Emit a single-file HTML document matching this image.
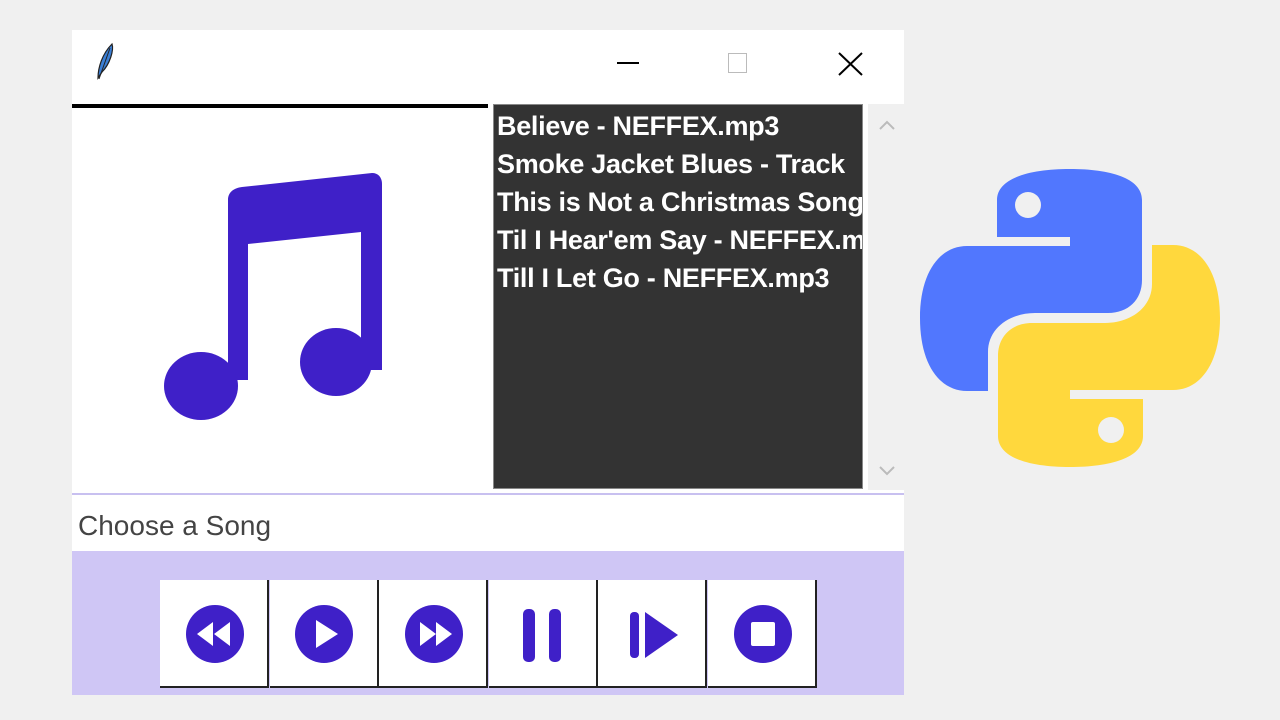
<!DOCTYPE html>
<html><head><style>
body{margin:0;width:1280px;height:720px;background:#f0f0f0;position:relative;overflow:hidden;font-family:"Liberation Sans",sans-serif}
.a{position:absolute}
.lst div{height:38px;line-height:38px;white-space:nowrap;font-weight:bold;font-size:27px;color:#fff;letter-spacing:-0.3px}
.btn{position:absolute;top:580px;width:107px;height:106px;background:#fff;border-right:2px solid #222;border-bottom:2px solid #222}
</style></head><body>
<div class="a" style="left:72px;top:30px;width:832px;height:665px;background:#fff"></div>
<svg class="a" style="left:92px;top:40px" width="30" height="42"><path d="M6 38 C6 28 10 14 20 4 C22 10 18 24 10 32 Z" fill="#3b7fd6" stroke="#222" stroke-width="1.2"/><path d="M7 39 L18 8" stroke="#222" stroke-width="1"/></svg>
<div class="a" style="left:617px;top:62px;width:22px;height:2px;background:#000"></div>
<div class="a" style="left:728px;top:53px;width:19px;height:20px;border:1px solid #bbb;box-sizing:border-box"></div>
<svg class="a" style="left:838px;top:52px" width="26" height="24"><path d="M1 1 L24 23 M24 1 L1 23" stroke="#000" stroke-width="2"/></svg>
<div class="a" style="left:72px;top:104px;width:416px;height:4px;background:#000"></div>
<svg class="a" style="left:150px;top:160px" width="250" height="280"><g fill="#3f20c8">
<path d="M78 40 C78 32 84 28 92 27 L222 13 C228 13 232 17 232 24 L232 200 L211 200 L211 72 L98 84 L98 220 L78 220 Z"/>
<ellipse cx="51" cy="226" rx="37" ry="34"/><ellipse cx="186" cy="202" rx="36" ry="34"/>
<rect x="211" y="150" width="21" height="60"/></g></svg>
<div class="a lst" style="left:493px;top:104px;width:370px;height:385px;background:#333;border:1px solid #888;box-sizing:border-box;overflow:hidden;padding-left:3px;padding-top:2px">
<div>Believe - NEFFEX.mp3</div><div>Smoke Jacket Blues - Track</div><div>This is Not a Christmas Song</div><div>Til I Hear'em Say - NEFFEX.mp3</div><div>Till I Let Go - NEFFEX.mp3</div></div>
<div class="a" style="left:868px;top:104px;width:36px;height:386px;background:#f0f0f0"></div>
<svg class="a" style="left:878px;top:117px" width="18" height="365"><path d="M2 12 L9 5 L16 12 M2 350 L9 357 L16 350" stroke="#bbb" stroke-width="2" fill="none"/></svg>
<div class="a" style="left:72px;top:493px;width:832px;height:2px;background:#c8c0f0"></div>
<div class="a" style="left:78px;top:510px;font-size:28px;color:#444">Choose a Song</div>
<div class="a" style="left:72px;top:551px;width:832px;height:144px;background:#cfc6f5"></div>
<div class="btn" style="left:160px"></div><div class="btn" style="left:270px"></div><div class="btn" style="left:379px"></div><div class="btn" style="left:489px"></div><div class="btn" style="left:598px"></div><div class="btn" style="left:708px"></div>
<svg class="a" style="left:0;top:0" width="1280" height="720"><g fill="#3f20c8">
<ellipse cx="215" cy="634" rx="29" ry="29"/><path d="M213 622 L197 634 L213 646 Z M230 622 L214 634 L230 646 Z" fill="#fff"/>
<ellipse cx="324" cy="634" rx="29" ry="29"/><path d="M316 620 L338 634 L316 648 Z" fill="#fff"/>
<ellipse cx="434" cy="634" rx="29" ry="29"/><path d="M420 622 L436 634 L420 646 Z M436 622 L452 634 L436 646 Z" fill="#fff"/>
<rect x="523" y="609" width="12" height="53" rx="5"/><rect x="549" y="609" width="12" height="53" rx="5"/>
<rect x="630" y="612" width="9" height="46" rx="4"/><path d="M645 612 L678 635 L645 658 Z"/>
<ellipse cx="763" cy="634" rx="29" ry="29"/><rect x="751" y="622" width="24" height="24" rx="2" fill="#fff"/>
</g>
<path d="M997 200 C997 178 1030 169 1070 169 C1110 169 1142 178 1142 200 L1142 280 C1142 300 1128 313 1108 313 L1035 313 C1010 313 988 328 988 352 L988 391 L967 391 C940 391 920 365 920 318 C920 272 940 246 967 246 L1070 246 L1070 237 L997 237 Z" fill="#5177fe"/>
<path d="M997 200 C997 178 1030 169 1070 169 C1110 169 1142 178 1142 200 L1142 280 C1142 300 1128 313 1108 313 L1035 313 C1010 313 988 328 988 352 L988 391 L967 391 C940 391 920 365 920 318 C920 272 940 246 967 246 L1070 246 L1070 237 L997 237 Z" fill="#ffd83d" transform="rotate(180 1070 318)"/>
<circle cx="1028" cy="205" r="13" fill="#f0f0f0"/><circle cx="1111" cy="430" r="13" fill="#f0f0f0"/>
</svg>
</body></html>
